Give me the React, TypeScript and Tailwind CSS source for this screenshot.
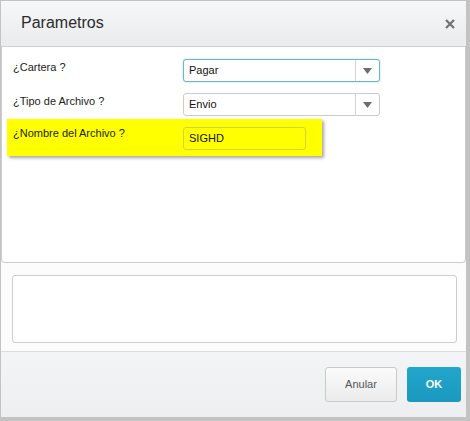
import React from "react";

type SelectProps = { value: string; focused?: boolean };

const FakeSelect = ({ value, focused }: SelectProps) => {
  return (
    <div
      className={`flex h-[23px] w-[197px] rounded-[3px] border bg-white ${
        focused ? "border-[#6bb6c7] shadow-[0_0_2px_rgba(90,170,190,0.5)]" : "border-[#cccccc]"
      }`}
    >
      <span className="flex-1 pl-[5px] text-[11px] leading-[21px] text-[#111]">{value}</span>
      <span className="flex w-[24px] items-center justify-center border-l border-[#d4d4d4]">
        <svg width="9" height="6" viewBox="0 0 9 6">
          <path d="M0 0 L9 0 L4.5 6 Z" fill="#6a6e73" />
        </svg>
      </span>
    </div>
  );
};

const App = () => {
  return (
    <div
      className="h-[421px] w-[470px] bg-[#c3c3c3] pl-px pt-px"
      style={{ fontFamily: '"Liberation Sans", Arial, sans-serif' }}
    >
      <div className="flex h-[416px] w-[465px] flex-col bg-[#fcfcfc]">
        {/* header */}
        <div className="flex h-[46px] items-center justify-between border-b border-[#cfd0d2] bg-gradient-to-b from-[#f6f7f8] to-[#eaebec] pl-[20px] pr-[11px]">
          <span className="pb-px text-[16px] text-[#2b2b2b]">Parametros</span>
          <svg width="10" height="10" viewBox="0 0 10 10">
            <path d="M1 1 L9 9 M9 1 L1 9" stroke="#6d7278" strokeWidth="2.2" />
          </svg>
        </div>

        {/* parameters */}
        <div className="h-[216px] rounded-b-[4px] border border-t-0 border-[#cbcbcb] bg-white pl-[5px] pt-[12px]">
          <div className="flex">
            <span className="w-[176px] pl-[6px] pt-px text-[11px] leading-[14px] text-[#222]">¿Cartera ?</span>
            <FakeSelect value="Pagar" focused />
          </div>
          <div className="mt-[11px] flex">
            <span className="w-[176px] pl-[6px] pt-px text-[11px] leading-[14px] text-[#222]">¿Tipo de Archivo ?</span>
            <FakeSelect value="Envio" />
          </div>
          <div className="mt-[3px] flex h-[37px] w-[315px] bg-[#ffff00] shadow-[2px_2px_3px_rgba(0,0,0,0.35)]">
            <span className="w-[176px] pl-[6px] pt-[7px] text-[11px] leading-[14px] text-[#222]">
              ¿Nombre del Archivo ?
            </span>
            <div className="pt-[8px]">
              <div className="h-[23px] w-[123px] rounded-[3px] border border-[#d2d24a] pl-[5px] text-[11px] leading-[21px] text-[#111]">
                SIGHD
              </div>
            </div>
          </div>
        </div>

        {/* notes */}
        <div className="ml-[11px] mt-[12px] h-[68px] w-[445px] rounded-[3px] border border-[#cdcdcd] bg-white" />

        {/* footer */}
        <div className="mt-[8px] flex h-[66px] items-center justify-end gap-[10px] border-t border-[#dcdcdc] bg-gradient-to-b from-[#f3f4f5] to-[#eeeff0] pr-[5px]">
          <button className="h-[35px] w-[72px] rounded-[3px] border border-[#c9c9c9] bg-gradient-to-b from-[#fbfbfb] to-[#ebebeb] text-[11px] text-[#555]">
            Anular
          </button>
          <button className="h-[35px] w-[54px] rounded-[3px] bg-gradient-to-b from-[#22a6cc] to-[#1b98c0] text-[11px] font-bold text-white">
            OK
          </button>
        </div>
      </div>
    </div>
  );
};

export default App;
